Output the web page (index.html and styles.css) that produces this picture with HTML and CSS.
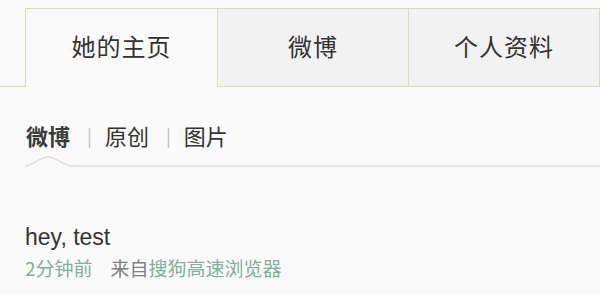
FILE: index.html
```html
<!DOCTYPE html>
<html>
<head>
<meta charset="utf-8">
<link rel="stylesheet" href="styles.css">
</head>
<body>
<div class="tabs">
  <div class="spacer"></div>
  <div class="tab active">她的主页</div>
  <div class="tab">微博</div>
  <div class="tab">个人资料</div>
</div>
<div class="subnav">
  <span class="sub current">微博</span>
  <span class="sep">|</span>
  <span class="sub">原创</span>
  <span class="sep">|</span>
  <span class="sub">图片</span>
</div>
<div class="rule">
  <svg class="rule-svg" width="575" height="14" viewBox="0 0 575 14">
    <path d="M0 10 C8 10, 14 1, 23 1 C32 1, 38 10, 48 10 L575 10" fill="none" stroke="#dcdcdc" stroke-width="1.5"/>
  </svg>
</div>
<div class="post">
  <div class="post-text">hey, test</div>
  <div class="meta"><span class="time">2分钟前</span><span class="from">来自</span><span class="src">搜狗高速浏览器</span></div>
</div>
</body>
</html>
```
FILE: styles.css
```css
html, body {
  margin: 0;
  padding: 0;
  background: #fafafa;
  font-family: "Liberation Sans", "Noto Sans CJK SC", sans-serif;
  color: #333;
  width: 600px;
  height: 295px;
  overflow: hidden;
}
.tabs {
  display: flex;
  margin-top: 8px;
  height: 79px;
}
.spacer {
  width: 25px;
  box-sizing: border-box;
  border-bottom: 1px solid #d6ddbd;
}
.tab {
  box-sizing: border-box;
  width: 191px;
  height: 79px;
  display: flex;
  align-items: center;
  justify-content: center;
  font-size: 24px;
  font-family: "Noto Sans CJK SC", sans-serif;
  color: #333;
  background: #f2f2f2;
  border-top: 1px solid #d6ddbd;
  border-right: 1px solid #d6ddbd;
  border-bottom: 1px solid #d6ddbd;
  letter-spacing: 1px;
  padding-bottom: 5px;
}
.tab.active {
  width: 193px;
  background: #fafafa;
  border-left: 1px solid #d6ddbd;
  border-bottom: none;
  padding-bottom: 6px;
}
.subnav {
  display: flex;
  align-items: center;
  margin: 0 0 0 26px;
  padding-top: 33px;
  height: 30px;
  font-family: "Noto Sans CJK SC", sans-serif;
  font-size: 22px;
  color: #333;
}
.sub.current {
  font-weight: bold;
  color: #3a3a3a;
}
.sep {
  color: #bbb;
  font-size: 18px;
  margin: 0 13px 0 17px;
}
.rule {
  margin-left: 25px;
  margin-top: 6px;
  height: 14px;
}
.rule-svg {
  display: block;
}
.post {
  margin-left: 25px;
  margin-top: 54px;
}
.post-text {
  font-family: "Liberation Sans", sans-serif;
  font-size: 23px;
  color: #333;
  line-height: 26px;
}
.meta {
  margin-top: 5px;
  font-family: "Noto Sans CJK SC", sans-serif;
  font-size: 19px;
  line-height: 26px;
}
.time, .src {
  color: #7fb09b;
}
.from {
  color: #808080;
  margin-left: 18px;
}
```
